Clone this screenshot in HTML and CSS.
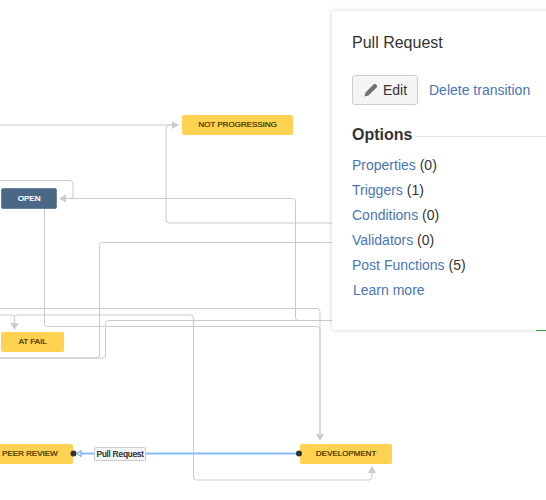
FILE: index.html
```
<!DOCTYPE html>
<html lang="en">
<head>
<meta charset="utf-8">
<title>Workflow</title>
<link rel="stylesheet" href="styles.css">
</head>
<body>
<main class="canvas">
  <svg class="edges" width="546" height="500" viewBox="0 0 546 500" aria-hidden="true">
    <g class="edge">
      <path d="M-5 125H172"/>
      <path d="M332 223H169a3 3 0 0 1-3-3V128a3 3 0 0 1 3-3H172"/>
      <path d="M0 180.500H70a3 3 0 0 1 3 3V195.500a3 3 0 0 1-3 3H64"/>
      <path d="M64 198.500H292.500a3 3 0 0 1 3 3V317.500a3 3 0 0 0 3 3H332"/>
      <path d="M44.500 209V323.500a3 3 0 0 0 3 3H317a3 3 0 0 1 3 3V434"/>
      <path d="M0 308.500H317a3 3 0 0 1 3 3V434"/>
      <path d="M0 315H12a2.500 2.500 0 0 1 2.500 2.500V323"/>
      <path d="M14.500 317.500a2.500 2.500 0 0 1 2.500-2.500H190.500a3 3 0 0 1 3 3V477a3 3 0 0 0 3 3H369a3 3 0 0 0 3-3V472"/>
      <path d="M332 242.500H102.500a3 3 0 0 0-3 3V355a3 3 0 0 1-3 3H0"/>
      <path d="M332 320.500H108.500a3 3 0 0 0-3 3V355a3 3 0 0 1-3 3H0"/>
    </g>
    <g class="head">
      <path d="M172 121L179 125L172 129Z"/>
      <path d="M66 194.500L59 198.500L66 202.500Z"/>
      <path d="M10.500 323L14.500 330L18.500 323Z"/>
      <path d="M316 434L320 441L324 434Z"/>
      <path d="M368 473L372 466L376 473Z"/>
    </g>
    <path class="active" d="M81 453.500H300"/>
    <path class="active-head" d="M81 450.500L77 453.500L81 456.500Z"/>
    <circle class="port" cx="73.500" cy="453.500" r="3"/>
    <circle class="port" cx="299" cy="453.500" r="3"/>
    <path class="green" d="M536 330.500H546"/>
  </svg>

  <div class="node node-status node-progress">NOT PROGRESSING</div>
  <div class="node node-open">OPEN</div>
  <div class="node node-status node-fail">AT FAIL</div>
  <div class="node node-status node-peer">PEER REVIEW</div>
  <div class="node node-status node-dev">DEVELOPMENT</div>
  <div class="edge-label">Pull Request</div>

  <aside class="panel">
    <h1 class="panel-title">Pull Request</h1>
    <div class="actions">
      <button class="btn" type="button">
        <svg class="pencil" width="14" height="14" viewBox="0 0 14 14" aria-hidden="true">
          <path d="M0.500 13.500L1.500 9.500L9.800 1.200a1.300 1.300 0 0 1 1.800 0L12.800 2.400a1.300 1.300 0 0 1 0 1.800L4.500 12.500Z"/>
        </svg>
        <span>Edit</span>
      </button>
      <a class="link" href="#">Delete transition</a>
    </div>
    <div class="options-head">
      <h2>Options</h2>
      <span class="rule"></span>
    </div>
    <ul class="options">
      <li><a class="link" href="#">Properties</a> (0)</li>
      <li><a class="link" href="#">Triggers</a> (1)</li>
      <li><a class="link" href="#">Conditions</a> (0)</li>
      <li><a class="link" href="#">Validators</a> (0)</li>
      <li><a class="link" href="#">Post Functions</a> (5)</li>
      <li class="learn"><a class="link" href="#">Learn more</a></li>
    </ul>
  </aside>
</main>
</body>
</html>
```
FILE: styles.css
```
html, body {
  margin: 0;
  padding: 0;
  background: #fff;
  overflow: hidden;
}

.canvas {
  position: relative;
  width: 546px;
  height: 500px;
  overflow: hidden;
  font-family: "Liberation Sans", Arial, sans-serif;
  color: #333;
}

.edges {
  position: absolute;
  left: 0;
  top: 0;
  z-index: 1;
}

.edge path {
  fill: none;
  stroke: #cbcbcb;
  stroke-width: 1;
}

.head path {
  fill: #cccccc;
}

.active {
  fill: none;
  stroke: #84bdfb;
  stroke-width: 2;
}

.active-head {
  fill: #fff;
  stroke: #4a9df5;
  stroke-width: 1;
}

.port {
  fill: #333;
}

.green {
  stroke: #3aa655;
  stroke-width: 1;
}

.node {
  position: absolute;
  display: flex;
  align-items: center;
  justify-content: center;
  height: 20px;
  border-radius: 2px;
  font-size: 8px;
  font-weight: 400;
  box-sizing: border-box;
  padding-bottom: 1px;
}

.node-status {
  background: #ffd351;
  color: #594300;
  text-shadow: 0.3px 0 0 #594300;
}

.node-open {
  left: 1px;
  top: 188px;
  width: 56px;
  height: 21px;
  background: #4a6785;
  border: 1px solid #6a84a0;
  color: #fff;
  text-shadow: 0.4px 0 0 #fff;
}

.node-progress { left: 182px; top: 115px; width: 111px; }
.node-fail { left: 1px; top: 332px; width: 63px; }
.node-peer { left: -12px; top: 444px; width: 85px; padding-left: 14px; justify-content: flex-start; }
.node-dev { left: 300px; top: 444px; width: 92px; }

.edge-label {
  position: absolute;
  z-index: 2;
  left: 94px;
  top: 447px;
  width: 52px;
  height: 14px;
  box-sizing: border-box;
  display: flex;
  align-items: center;
  justify-content: center;
  padding-bottom: 1px;
  background: #f5f5f5;
  border: 1px solid #ccc;
  border-radius: 2px;
  font-size: 8.300px;
  color: #333;
  text-shadow: 0.2px 0 0 #333;
}

.panel {
  position: absolute;
  z-index: 2;
  left: 332px;
  top: 11px;
  width: 240px;
  height: 319px;
  box-sizing: border-box;
  padding: 23px 20px 0;
  background: #fff;
  border-radius: 3px;
  box-shadow: 0 0 5px rgba(0, 0, 0, 0.18);
  font-size: 14px;
  color: #333;
}

.panel-title {
  margin: 0;
  font-size: 16px;
  font-weight: 400;
  line-height: 18px;
}

.actions {
  display: flex;
  align-items: center;
  gap: 11px;
  margin-top: 23px;
}

.btn {
  display: flex;
  align-items: center;
  justify-content: center;
  gap: 5px;
  width: 66px;
  height: 30px;
  padding: 0 0 0 1px;
  background: #f5f5f5;
  border: 1px solid #ccc;
  border-radius: 3px;
  font: 14px "Liberation Sans", Arial, sans-serif;
  color: #333;
}

.pencil path {
  fill: #707070;
}

.link {
  color: #4a76b3;
  text-decoration: none;
}

.options-head {
  display: flex;
  align-items: center;
  gap: 3px;
  margin-top: 20px;
}

.options-head h2 {
  margin: 0;
  font-size: 16px;
  font-weight: 700;
  line-height: 20px;
}

.rule {
  flex: 1;
  height: 1px;
  margin-top: 2px;
  background: #e4e4e4;
}

.options {
  list-style: none;
  margin: 8px 0 0;
  padding: 0;
  line-height: 25px;
}

.learn {
  padding-left: 1px;
}
```
